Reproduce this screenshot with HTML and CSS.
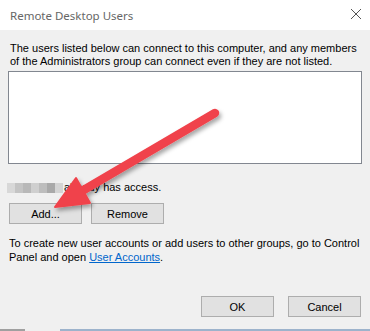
FILE: index.html
```html
<!DOCTYPE html>
<html lang="en">
<head>
    <meta charset="UTF-8">
    <title>Remote Desktop Users</title>
    <link rel="stylesheet" href="styles.css">
</head>
<body>

<div class="dialog">
    <!-- title bar -->
    <div class="titlebar">
        <span class="title">Remote Desktop Users</span>
        <svg class="close" width="12" height="12" viewBox="0 0 12 12">
            <path d="M1 1L11 11M11 1L1 11" stroke="#555" stroke-width="1" fill="none"/>
        </svg>
    </div>

    <div class="content">
        <p class="intro">The users listed below can connect to this computer, and any members of the Administrators group can connect even if they are not listed.</p>
        <div class="listbox"></div>

        <p class="access"><span class="blur"><i class="b1"></i><i class="b2"></i><i class="b3"></i><i class="b4"></i><i class="b5"></i><i class="b6"></i><i class="b7"></i></span>already has access.</p>

        <div class="row">
            <button class="btn">Add...</button>
            <button class="btn">Remove</button>
        </div>

        <p class="note">To create new user accounts or add users to other groups, go to Control Panel and open <a href="#">User Accounts</a>.</p>

        <div class="footer">
            <button class="btn">OK</button>
            <button class="btn">Cancel</button>
        </div>
    </div>
    <div class="bottom-edge"></div>

    <!-- annotation arrow -->
    <svg class="arrow" width="370" height="331" viewBox="0 0 370 331">
        <defs>
            <filter id="shadow" x="-20%" y="-20%" width="140%" height="140%">
                <feDropShadow dx="2" dy="3" stdDeviation="2" flood-color="#000" flood-opacity="0.35"/>
            </filter>
        </defs>
        <g filter="url(#shadow)" fill="#f0434b" stroke="#f0434b">
            <line x1="215" y1="113" x2="82" y2="191" stroke-width="8.5" stroke-linecap="round"/>
            <polygon points="55,207 76,178 90,203" stroke-width="2" stroke-linejoin="round"/>
        </g>
    </svg>
</div>

</body>
</html>
```

FILE: styles.css
```css
body {
    margin: 0;
    padding: 0;
    font-family: "Liberation Sans", Arial, sans-serif;
    font-size: 11px;
    color: #000;
}
.dialog {
    position: relative;
    width: 370px;
    height: 331px;
    background-color: #f0f0f0;
    display: flex;
    flex-direction: column;
    overflow: hidden;
}
.titlebar {
    height: 30px;
    background-color: #fff;
    display: flex;
    align-items: center;
    justify-content: space-between;
    padding: 0 8px 0 10px;
    flex-shrink: 0;
}
.title {
    font-family: "Noto Sans", "Open Sans", sans-serif;
    font-size: 11.5px;
    color: #666;
}
.close {
    margin-top: -2px;
}
.content {
    flex: 1;
    display: flex;
    flex-direction: column;
    padding: 12px 8px 0 8px;
}
p {
    margin: 0;
}
.intro {
    line-height: 13px;
    padding-left: 2px;
}
.listbox {
    margin-top: 3px;
    height: 91px;
    background-color: #fff;
    border: 1px solid #828790;
}
.access {
    margin-top: 17px;
    line-height: 13px;
    display: flex;
    align-items: center;
}
.blur {
    display: inline-flex;
    height: 10px;
    margin-left: -1px;
    margin-right: 1px;
}
.blur i {
    display: block;
    width: 8px;
    height: 10px;
}
.b1 { background-color: #d8d8d8; }
.b2 { background-color: #c4c4c4; }
.b3 { background-color: #b8b8b8; }
.b4 { background-color: #cfcfcf; }
.b5 { background-color: #bdbdbd; }
.b6 { background-color: #a9a9a9; }
.b7 { background-color: #d4d4d4; }
.row {
    margin-top: 9px;
    display: flex;
    gap: 9px;
    padding-left: 1px;
}
.btn {
    width: 73px;
    height: 21px;
    background-color: #e1e1e1;
    border: 1px solid #adadad;
    font-family: "Liberation Sans", Arial, sans-serif;
    font-size: 11px;
    color: #000;
    padding: 0;
}
.note {
    margin-top: 12px;
    line-height: 14px;
    padding-left: 1px;
}
.note a {
    color: #0066cc;
}
.footer {
    margin-top: auto;
    margin-bottom: 12px;
    display: flex;
    justify-content: flex-end;
    gap: 14px;
    padding-right: 1px;
}
.bottom-edge {
    height: 2px;
    flex-shrink: 0;
    background: linear-gradient(to right, #a0a0a0 0, #a0a0a0 25px, transparent 25px, transparent 60px, #9db3cc 60px);
}
.arrow {
    position: absolute;
    left: 0;
    top: 0;
    pointer-events: none;
}
```
